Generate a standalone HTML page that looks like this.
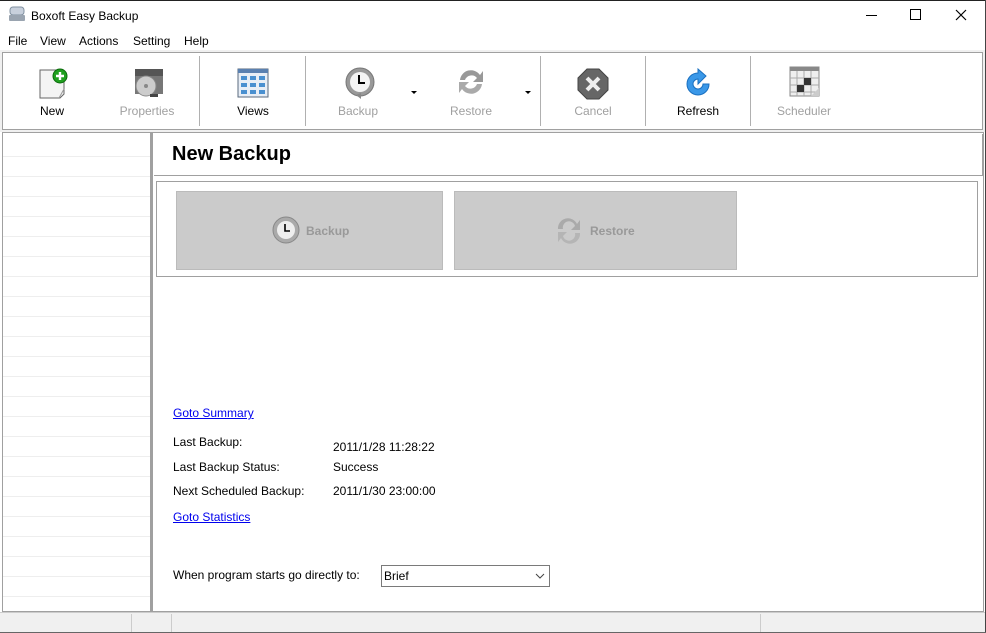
<!DOCTYPE html>
<html><head><meta charset="utf-8"><style>
*{margin:0;padding:0;box-sizing:border-box}
body{width:986px;height:633px;background:#fff;font-family:"Liberation Sans",sans-serif;font-size:12px;color:#000;position:relative;overflow:hidden}
.a{position:absolute}
.tb{text-align:center;font-size:12px;width:90px}
.dis{color:#a0a0a0}
.sep{position:absolute;top:56px;width:1px;height:70px;background:#b0b0b0}
a.a{color:#0000ee;text-decoration:underline}
</style></head><body>
<div class="a" style="left:0;top:0;width:986px;height:1px;background:#222"></div>
<div class="a" style="left:985px;top:0;width:1px;height:633px;background:#444"></div>
<svg class="a" style="left:8px;top:6px" width="18" height="16"><rect x="2" y="1" width="14" height="8" rx="3" fill="#c8d0dc" stroke="#8090a0"/><rect x="1" y="9" width="16" height="6" rx="1" fill="#9aa4b0"/></svg>
<div class="a" style="left:31px;top:9px;font-size:12px">Boxoft Easy Backup</div>
<div class="a" style="left:866px;top:15px;width:11px;height:1px;background:#000"></div>
<div class="a" style="left:910px;top:9px;width:11px;height:11px;border:1px solid #000"></div>
<svg class="a" style="left:955px;top:9px" width="12" height="12"><path d="M1 1L11 11M11 1L1 11" stroke="#000" stroke-width="1.2"/></svg>
<div class="a" style="left:8px;top:34px">File</div>
<div class="a" style="left:40px;top:34px">View</div>
<div class="a" style="left:79px;top:34px">Actions</div>
<div class="a" style="left:133px;top:34px">Setting</div>
<div class="a" style="left:184px;top:34px">Help</div>
<div class="a" style="left:0;top:50px;width:985px;height:82px;background:#f0f0f0"></div>
<div class="a" style="left:2px;top:52px;width:981px;height:78px;background:#fff;border:1px solid #a0a0a0"></div>
<div class="sep" style="left:199px"></div><div class="sep" style="left:305px"></div><div class="sep" style="left:540px"></div><div class="sep" style="left:645px"></div><div class="sep" style="left:750px"></div>
<svg class="a" style="left:38px;top:67px" width="32" height="32"><path d="M2 3h20l4 4v20l-4 4H2z" fill="#f4f4f4" stroke="#666"/><path d="M26 22l-5 9" stroke="#999"/><circle cx="22" cy="9" r="7" fill="#1fa01f" stroke="#0a6a0a"/><path d="M22 5v8M18 9h8" stroke="#fff" stroke-width="2.4"/></svg>
<div class="a tb" style="left:7px;top:104px">New</div>
<svg class="a" style="left:132px;top:67px" width="34" height="32"><rect x="3" y="2" width="28" height="8" fill="#555"/><rect x="3" y="9" width="28" height="18" fill="#777"/><circle cx="14" cy="19" r="10" fill="#ccc" stroke="#888"/><circle cx="14" cy="19" r="2" fill="#888"/><rect x="18" y="27" width="8" height="3" fill="#444"/></svg>
<div class="a tb dis" style="left:102px;top:104px">Properties</div>
<svg class="a" style="left:237px;top:68px" width="32" height="30"><rect x="1" y="1" width="30" height="28" fill="#e8eef6" stroke="#5a6a7e"/><rect x="1" y="1" width="30" height="4" fill="#5a80b0"/><g fill="#4a90d0"><rect x="4" y="8" width="6" height="4"/><rect x="13" y="8" width="6" height="4"/><rect x="22" y="8" width="6" height="4"/><rect x="4" y="15" width="6" height="4"/><rect x="13" y="15" width="6" height="4"/><rect x="22" y="15" width="6" height="4"/><rect x="4" y="22" width="6" height="4"/><rect x="13" y="22" width="6" height="4"/><rect x="22" y="22" width="6" height="4"/></g></svg>
<div class="a tb" style="left:208px;top:104px">Views</div>
<svg class="a" style="left:344px;top:66px" width="32" height="34"><circle cx="16" cy="16" r="14" fill="#999" stroke="#777"/><circle cx="16" cy="16" r="10" fill="#f4f4f4"/><path d="M15 9v8h6" stroke="#000" stroke-width="2" fill="none"/><path d="M12 29l5 4v-6z" fill="#888"/></svg>
<div class="a tb dis" style="left:313px;top:104px">Backup</div>
<div class="a" style="left:411px;top:91px;border:3px solid transparent;border-top:3px solid #000"></div>
<svg class="a" style="left:455px;top:66px" width="32" height="32"><path d="M5 14A11 11 0 0 1 25 9l3-4v11h-10l4-4A7 7 0 0 0 10 14z" fill="#999"/><path d="M27 18A11 11 0 0 1 7 23l-3 4V16h10l-4 4a7 7 0 0 0 12-2z" fill="#aaa"/></svg>
<div class="a tb dis" style="left:426px;top:104px">Restore</div>
<div class="a" style="left:525px;top:91px;border:3px solid transparent;border-top:3px solid #000"></div>
<svg class="a" style="left:577px;top:68px" width="32" height="32"><path d="M10 1h12l9 9v12l-9 9H10l-9-9V10z" fill="#666" stroke="#444"/><path d="M10 10l12 12M22 10L10 22" stroke="#eee" stroke-width="4"/></svg>
<div class="a tb dis" style="left:548px;top:104px">Cancel</div>
<svg class="a" style="left:683px;top:68px" width="30" height="30"><path d="M15 5A11 11 0 1 0 26 16h-6a5 5 0 1 1-5-5v5l8-8-8-7z" fill="#3a98e8" stroke="#1a70c0"/></svg>
<div class="a tb" style="left:653px;top:104px">Refresh</div>
<svg class="a" style="left:789px;top:66px" width="32" height="32"><rect x="1" y="1" width="29" height="29" fill="#eee" stroke="#888"/><rect x="1" y="1" width="29" height="4" fill="#888"/><path d="M1 12h29M1 19h29M1 26h29M8 5v25M15 5v25M22 5v25" stroke="#aaa"/><rect x="8" y="19" width="7" height="7" fill="#333"/><rect x="15" y="12" width="7" height="7" fill="#333"/><path d="M22 30l8-8v8z" fill="#ccc"/></svg>
<div class="a tb dis" style="left:759px;top:104px">Scheduler</div>
<div class="a" style="left:2px;top:132px;width:150px;height:480px;border:1px solid #a0a0a0;border-right:2px solid #a0a0a0;background:repeating-linear-gradient(#fff 0 19px,#eee 19px 20px);background-position:0 4px"></div>
<div class="a" style="left:152px;top:132px;width:832px;height:480px;border:1px solid #a0a0a0"></div>
<div class="a" style="left:154px;top:134px;width:829px;height:42px;border:1px solid #a0a0a0;border-top:none;border-left:none"></div>
<div class="a" style="left:172px;top:143px;font-size:20px;font-weight:bold">New Backup</div>
<div class="a" style="left:156px;top:181px;width:822px;height:96px;border:1px solid #a0a0a0"></div>
<div class="a" style="left:176px;top:191px;width:267px;height:79px;background:#cbcbcb;border:1px solid #bbb"></div>
<div class="a" style="left:454px;top:191px;width:283px;height:79px;background:#cbcbcb;border:1px solid #bbb"></div>
<svg class="a" style="left:271px;top:215px" width="30" height="32"><circle cx="15" cy="15" r="13" fill="#aaa" stroke="#888"/><circle cx="15" cy="15" r="9" fill="#eee"/><path d="M14 9v7h5" stroke="#000" stroke-width="1.6" fill="none"/></svg>
<div class="a" style="left:306px;top:224px;color:#999;font-weight:bold;font-size:12px">Backup</div>
<svg class="a" style="left:554px;top:216px" width="30" height="30"><path d="M4 13A10 10 0 0 1 23 8l3-4v10h-9l4-4A6 6 0 0 0 9 13z" fill="#aaa"/><path d="M26 17A10 10 0 0 1 7 22l-3 4V16h9l-4 4a6 6 0 0 0 12-3z" fill="#b5b5b5"/></svg>
<div class="a" style="left:590px;top:224px;color:#999;font-weight:bold;font-size:12px">Restore</div>
<a class="a" style="left:173px;top:406px">Goto Summary</a>
<div class="a" style="left:173px;top:435px">Last Backup:</div>
<div class="a" style="left:333px;top:440px">2011/1/28 11:28:22</div>
<div class="a" style="left:173px;top:460px">Last Backup Status:</div>
<div class="a" style="left:333px;top:460px">Success</div>
<div class="a" style="left:173px;top:484px">Next Scheduled Backup:</div>
<div class="a" style="left:333px;top:484px">2011/1/30 23:00:00</div>
<a class="a" style="left:173px;top:510px">Goto Statistics</a>
<div class="a" style="left:173px;top:568px">When program starts go directly to:</div>
<div class="a" style="left:381px;top:565px;width:169px;height:22px;border:1px solid #7a7a7a;padding:3px 2px">Brief</div>
<svg class="a" style="left:535px;top:573px" width="10" height="6"><path d="M1 1l4 4 4-4" stroke="#444" fill="none"/></svg>
<div class="a" style="left:0;top:612px;width:985px;height:21px;background:#f0f0f0;border-top:1px solid #ccc"></div>
<div class="a" style="left:131px;top:614px;width:1px;height:18px;background:#ccc"></div>
<div class="a" style="left:171px;top:614px;width:1px;height:18px;background:#ccc"></div>
<div class="a" style="left:760px;top:614px;width:1px;height:18px;background:#ccc"></div>
<div class="a" style="left:0;top:632px;width:986px;height:1px;background:#666"></div>
</body></html>
